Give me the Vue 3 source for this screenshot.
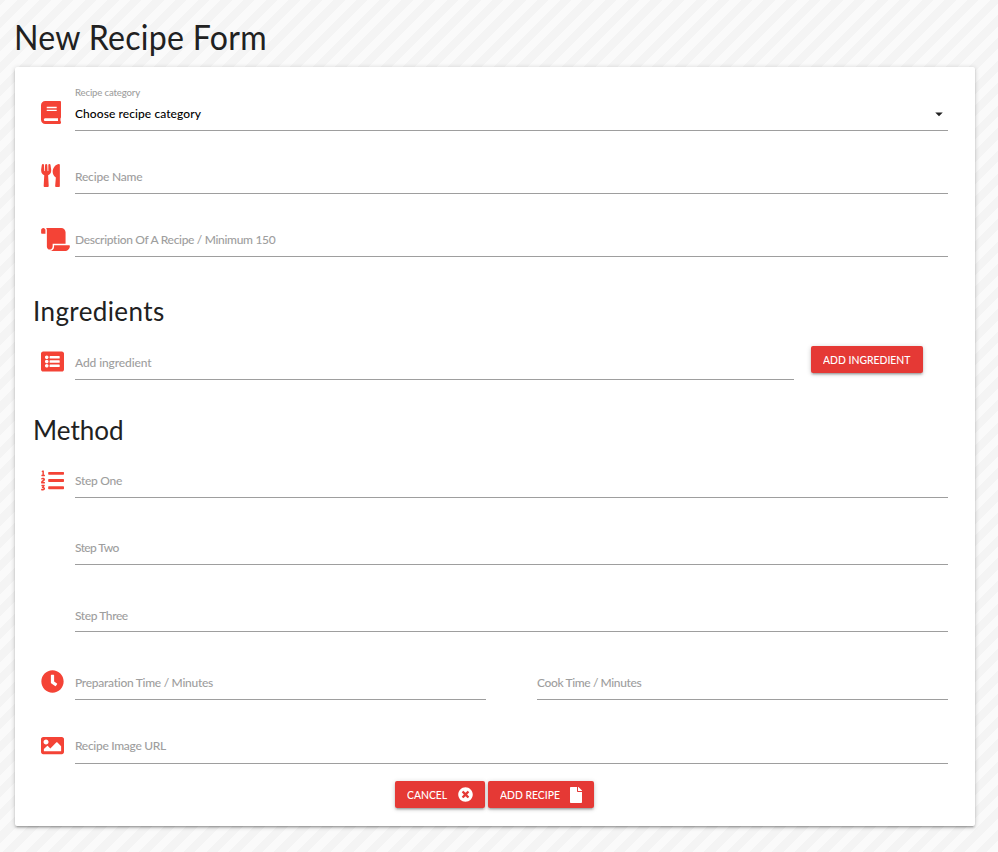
<script setup>
import { ref } from 'vue'

const icons = {
  book: ['0 0 448 512', 'M448 360V24c0-13.300-10.700-24-24-24H96C43 0 0 43 0 96v320c0 53 43 96 96 96h328c13.300 0 24-10.700 24-24v-16c0-7.500-3.500-14.300-8.900-18.700-4.200-15.400-4.200-59.300 0-74.700 5.400-4.300 8.900-11.100 8.900-18.600zM128 134c0-3.300 2.700-6 6-6h212c3.300 0 6 2.700 6 6v20c0 3.300-2.700 6-6 6H134c-3.300 0-6-2.700-6-6v-20zm0 64c0-3.300 2.700-6 6-6h212c3.300 0 6 2.700 6 6v20c0 3.300-2.700 6-6 6H134c-3.300 0-6-2.700-6-6v-20zm253.400 250H96c-17.700 0-32-14.300-32-32 0-17.600 14.400-32 32-32h285.400c-1.900 17.100-1.900 46.900 0 64z'],
  utensils: ['0 0 416 512', 'M207.900 15.200c.8 4.700 16.100 94.500 16.100 128.800 0 52.300-27.800 89.600-68.900 104.600L168 486.700c.7 13.700-10.200 25.300-24 25.300H80c-13.700 0-24.700-11.500-24-25.300l12.900-238.100C27.700 233.600 0 196.200 0 144 0 109.600 15.300 19.900 16.100 15.200 19.300-5.100 61.400-5.400 64 16.300v141.200c1.300 3.400 15.100 3.200 16 0 1.400-25.300 7.900-139.200 8-141.800 3.300-20.800 44.700-20.800 47.900 0 .2 2.700 6.600 116.500 8 141.800.9 3.200 14.800 3.400 16 0V16.300c2.600-21.600 44.800-21.400 48-1.100zm119.200 285.700l-15 185.100c-1.200 14 9.900 26 23.900 26h56c13.300 0 24-10.700 24-24V24c0-13.200-10.700-24-24-24-82.500 0-221.400 178.500-64.900 300.900z'],
  scroll: ['0 0 640 512', 'M48 0C21.530 0 0 21.530 0 48v64c0 8.840 7.160 16 16 16h80V48C96 21.530 74.470 0 48 0zm208 412.570V352h288V96c0-52.940-43.060-96-96-96H111.590C121.740 13.410 128 29.920 128 48v368c0 38.870 34.650 69.650 74.750 63.120C234.220 474 256 444.460 256 412.570zM288 384v32c0 52.930-43.060 96-96 96h336c61.860 0 112-50.140 112-112 0-8.840-7.160-16-16-16H288z'],
  listAlt: ['0 0 512 512', 'M464 480H48c-26.510 0-48-21.490-48-48V80c0-26.510 21.490-48 48-48h416c26.510 0 48 21.490 48 48v352c0 26.510-21.490 48-48 48zM128 120c-22.091 0-40 17.909-40 40s17.909 40 40 40 40-17.909 40-40-17.909-40-40-40zm0 96c-22.091 0-40 17.909-40 40s17.909 40 40 40 40-17.909 40-40-17.909-40-40-40zm0 96c-22.091 0-40 17.909-40 40s17.909 40 40 40 40-17.909 40-40-17.909-40-40-40zm288-136v-32c0-6.627-5.373-12-12-12H204c-6.627 0-12 5.373-12 12v32c0 6.627 5.373 12 12 12h200c6.627 0 12-5.373 12-12zm0 96v-32c0-6.627-5.373-12-12-12H204c-6.627 0-12 5.373-12 12v32c0 6.627 5.373 12 12 12h200c6.627 0 12-5.373 12-12zm0 96v-32c0-6.627-5.373-12-12-12H204c-6.627 0-12 5.373-12 12v32c0 6.627 5.373 12 12 12h200c6.627 0 12-5.373 12-12z'],
  listOl: ['0 0 512 512', 'M61.770 401l17.500-20.150a19.920 19.920 0 0 0 5.070-14.190v-3.310C84.340 356 80.500 352 73 352H16a8 8 0 0 0-8 8v16a8 8 0 0 0 8 8h22.830a157.410 157.410 0 0 0-11 12.310l-5.610 7c-4 5.070-5.250 10.130-2.800 14.880l1.050 1.930c3 5.760 6.290 7.880 12.250 7.880h4.730c10.330 0 15.940 2.440 15.940 9.090 0 4.720-4.200 8.220-14.360 8.220a41.540 41.540 0 0 1-15.470-3.120c-6.490-3.880-11.740-3.500-15.600 3.120l-5.590 9.310c-3.720 6.130-3.190 11.720 2.630 15.940 7.710 4.690 20.380 9.440 37 9.440 34.160 0 48.500-22.750 48.500-44.120-.03-14.380-9.120-29.760-28.730-34.880zM496 224H176a16 16 0 0 0-16 16v32a16 16 0 0 0 16 16h320a16 16 0 0 0 16-16v-32a16 16 0 0 0-16-16zm0-160H176a16 16 0 0 0-16 16v32a16 16 0 0 0 16 16h320a16 16 0 0 0 16-16V80a16 16 0 0 0-16-16zm0 320H176a16 16 0 0 0-16 16v32a16 16 0 0 0 16 16h320a16 16 0 0 0 16-16v-32a16 16 0 0 0-16-16zM16 160h64a8 8 0 0 0 8-8v-16a8 8 0 0 0-8-8H64V40a8 8 0 0 0-8-8H32a8 8 0 0 0-7.140 4.420l-8 16A8 8 0 0 0 24 64h8v64H16a8 8 0 0 0-8 8v16a8 8 0 0 0 8 8zm-3.910 160H80a8 8 0 0 0 8-8v-16a8 8 0 0 0-8-8H41.320c3.290-10.290 48.340-18.680 48.340-56.440 0-29.060-25-39.560-44.470-39.560-21.360 0-33.800 10-40.460 18.750-4.370 5.590-3 10.840 2.800 15.370l8.580 6.880c5.610 4.560 11 2.470 16.120-2.440a13.440 13.440 0 0 1 9.460-3.840c3.330 0 9.280 1.560 9.280 8.750C51 248.190 0 257.310 0 304.590v4C0 316 5.080 320 12.090 320z'],
  clock: ['0 0 512 512', 'M256 8C119 8 8 119 8 256s111 248 248 248 248-111 248-248S393 8 256 8zm57.100 350.100L224.900 294c-3.100-2.300-4.900-5.900-4.900-9.700V116c0-6.600 5.400-12 12-12h48c6.600 0 12 5.400 12 12v137.700l63.500 46.200c5.400 3.900 6.500 11.400 2.600 16.800l-28.200 38.800c-3.900 5.300-11.400 6.500-16.800 2.600z'],
  image: ['0 0 512 512', 'M464 448H48c-26.510 0-48-21.490-48-48V112c0-26.510 21.490-48 48-48h416c26.510 0 48 21.490 48 48v288c0 26.510-21.490 48-48 48zM112 120c-30.928 0-56 25.072-56 56s25.072 56 56 56 56-25.072 56-56-25.072-56-56-56zM64 384h384V272l-87.515-87.515c-4.686-4.686-12.284-4.686-16.971 0L208 320l-55.515-55.515c-4.686-4.686-12.284-4.686-16.971 0L64 336v48z'],
  close: ['0 0 512 512', 'M256 8C119 8 8 119 8 256s111 248 248 248 248-111 248-248S393 8 256 8zm121.600 313.100c4.700 4.700 4.700 12.300 0 17L338 377.600c-4.700 4.700-12.300 4.700-17 0L256 312l-65.100 65.600c-4.700 4.700-12.300 4.700-17 0L134.400 338c-4.700-4.700-4.700-12.300 0-17l65.600-65-65.600-65.100c-4.700-4.700-4.700-12.300 0-17l39.600-39.600c4.700-4.700 12.300-4.700 17 0l65 65.700 65.100-65.600c4.700-4.700 12.300-4.700 17 0l39.600 39.600c4.700 4.700 4.700 12.300 0 17L312 256z'],
  file: ['0 0 384 512', 'M224 136V0H24C10.700 0 0 10.700 0 24v464c0 13.300 10.700 24 24 24h336c13.300 0 24-10.700 24-24V160H248c-13.200 0-24-10.800-24-24zm160-14.100v6.100H256V0h6.100c6.400 0 12.500 2.500 17 7l97.900 98c4.500 4.500 7 10.600 7 16.900z']
}

const sections = ref([
  {
    rows: [
      { size: 'first', icon: 'book', fields: [{ key: 'category', caption: 'Recipe category', text: 'Choose recipe category', select: true }] },
      { size: 'normal', icon: 'utensils', fields: [{ key: 'name', text: 'Recipe Name' }] },
      { size: 'normal', icon: 'scroll', fields: [{ key: 'description', text: 'Description Of A Recipe / Minimum 150' }] }
    ]
  },
  {
    title: 'Ingredients',
    name: 'ingredients',
    rows: [{ size: 'normal', icon: 'listAlt', fields: [{ key: 'ingredient', text: 'Add ingredient' }], action: 'Add Ingredient' }]
  },
  {
    title: 'Method',
    name: 'method',
    rows: [
      { size: 'normal', icon: 'listOl', fields: [{ key: 'step1', text: 'Step One' }] },
      { size: 'tall', fields: [{ key: 'step2', text: 'Step Two' }] },
      { size: 'tall', fields: [{ key: 'step3', text: 'Step Three' }] },
      { size: 'taller', icon: 'clock', fields: [{ key: 'prep', text: 'Preparation Time / Minutes' }, { key: 'cook', text: 'Cook Time / Minutes' }] },
      { size: 'first', icon: 'image', fields: [{ key: 'image', text: 'Recipe Image URL' }] }
    ]
  }
])
</script>

<template>
  <main class="page">
    <h1><span>New Recipe Form</span></h1>
    <form class="card" @submit.prevent>
      <section v-for="(section, i) in sections" :key="i">
        <h2 v-if="section.title" :class="section.name"><span>{{ section.title }}</span></h2>
        <div v-for="row in section.rows" :key="row.fields[0].key" class="row" :class="row.size">
          <div class="prefix">
            <svg v-if="row.icon" :class="row.icon" :viewBox="icons[row.icon][0]"><path :d="icons[row.icon][1]" /></svg>
          </div>
          <div class="fields">
            <div v-for="field in row.fields" :key="field.key" class="field" :class="['f-' + field.key, { select: field.select }]">
              <small v-if="field.caption"><span>{{ field.caption }}</span></small>
              <label><span>{{ field.text }}</span></label>
              <svg v-if="field.select" class="caret" viewBox="0 0 24 24"><path d="M7 10l5 5 5-5z" /></svg>
            </div>
          </div>
          <div v-if="row.action" class="action">
            <button type="button" class="add"><span>{{ row.action }}</span></button>
          </div>
        </div>
      </section>
      <footer>
        <button type="button" class="cancel"><span>Cancel</span><svg :viewBox="icons.close[0]"><path :d="icons.close[1]" /></svg></button>
        <button type="submit" class="submit"><span>Add Recipe</span><svg :viewBox="icons.file[0]"><path :d="icons.file[1]" /></svg></button>
      </footer>
    </form>
  </main>
</template>

<style>
body { margin: 0; overflow: hidden; }
</style>

<style scoped>
* { box-sizing: border-box; }
.page {
  height: 852px;
  padding: 15px 23px 0 15px;
  font-family: Lato, "Liberation Sans", sans-serif;
  color: #212121;
  background: repeating-linear-gradient(-45deg, #fafafa 0 8px, #f4f4f4 8px 16px);
}
span { display: inline-block; white-space: nowrap; transform-origin: left center; }
h1, h2 { margin: 0; font-weight: 400; }
h1 { height: 52px; font-size: 34.500px; line-height: 43px; letter-spacing: 0.300px; }
h1 span { margin-left: -1px; transform: scaleX(.93); }
.card {
  width: 960px;
  height: 759px;
  background: #fff;
  border-radius: 2px;
  box-shadow: 0 2px 2px rgba(0,0,0,.14), 0 3px 1px -2px rgba(0,0,0,.12), 0 1px 5px rgba(0,0,0,.2);
}
h2 { padding-left: 18px; font-size: 26px; }
.ingredients { height: 60px; padding-top: 34px; line-height: 40px; letter-spacing: .4px; }
.method { height: 55px; padding-top: 30px; line-height: 40px; }
.row { display: flex; height: 63px; padding: 0 27px 0 26px; }
.row.first { height: 64px; }
.row.tall { height: 67px; }
.row.taller { height: 68px; }
.prefix { display: flex; align-items: flex-end; width: 34px; flex: none; padding-bottom: 6px; }
.prefix svg { width: 23px; height: 23px; fill: #f44336; flex: none; margin-bottom: 1px; }
.prefix .book { width: 20px; }
.prefix .utensils { width: 19px; }
.prefix .scroll { width: 29px; margin-bottom: 0; }
.prefix .listOl { margin-bottom: 0; }
.fields { display: flex; gap: 51px; flex: 1; }
.field { display: flex; flex: 1; align-items: flex-end; padding-bottom: 7px; border-bottom: 1px solid #9e9e9e; color: #9e9e9e; font-size: 12px; font-weight: 500; line-height: 18px; }
.f-category label { letter-spacing: .08px; }
.f-name { letter-spacing: -.2px; }
.f-description { letter-spacing: -.32px; }
.f-ingredient { letter-spacing: -.1px; }
.f-step1 { letter-spacing: -.28px; }
.f-step2 { letter-spacing: -.6px; }
.f-step3 { letter-spacing: -.42px; padding-bottom: 6px; }
.f-prep { letter-spacing: -.28px; }
.f-cook { letter-spacing: -.38px; }
.f-image { letter-spacing: -.3px; padding-bottom: 8px; }
.select { display: grid; grid-template-columns: 1fr 18px; align-content: end; color: #000; }
.select small { grid-column: 1 / 3; height: 20px; font-size: 9.600px; color: #9e9e9e; line-height: 16px; letter-spacing: -.16px; }
.caret { width: 18px; height: 18px; fill: #212121; }
.action { width: 154px; flex: none; padding: 29px 0 0 17px; }
button { position: relative; display: flex; align-items: center; justify-content: space-between; height: 27px; padding: 0 12px; border: 0; border-radius: 2px; background: #e53935; color: #fff; font: 500 12px Lato, sans-serif; text-transform: uppercase; box-shadow: 0 2px 2px rgba(0,0,0,.14), 0 3px 1px -2px rgba(0,0,0,.12), 0 1px 5px rgba(0,0,0,.2); }
button span { width: 0; transform: scaleX(.865); }
button svg { height: 15px; flex: none; fill: #fff; }
.add { width: 112px; }
footer { display: flex; justify-content: center; gap: 3px; padding: 17px 2px 0 0; }
.cancel { width: 90px; }
.cancel svg { width: 15px; }
.submit { width: 106px; }
.submit svg { width: 12px; height: 16px; }
</style>
